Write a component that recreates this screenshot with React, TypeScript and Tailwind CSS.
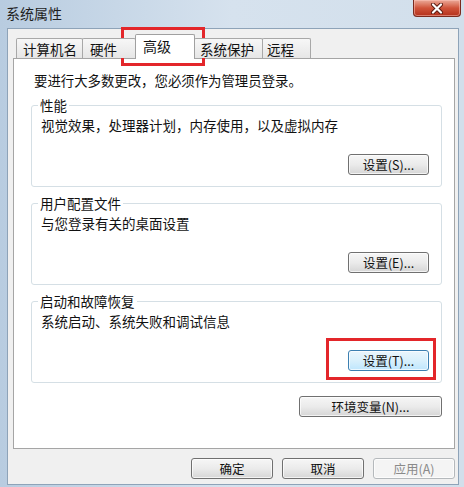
import React from "react";

function Btn({
  children,
  className = "",
  variant = "normal",
}: {
  children: React.ReactNode;
  className?: string;
  variant?: "normal" | "focus" | "disabled";
}) {
  const v =
    variant === "focus"
      ? "border-[#3c7fb1] bg-gradient-to-b from-[#eaf6fd] via-[#d9f0fc] to-[#bee6fd] text-[#111]"
      : variant === "disabled"
      ? "border-[#b5b9bc] bg-[#f4f4f4] text-[#8a8a8a]"
      : "border-[#707070] bg-gradient-to-b from-[#f6f6f6] via-[#ebebeb] to-[#d6d6d6] text-[#111]";
  return (
    <div
      className={`h-[21px] rounded-[3px] border flex items-center justify-center text-[12.5px] leading-[16px] shadow-[inset_0_0_0_1px_rgba(255,255,255,0.7)] ${v} ${className}`}
    >
      {children}
    </div>
  );
}

function Group({
  label,
  text,
  btn,
  focus,
}: {
  label: string;
  text: string;
  btn: string;
  focus?: boolean;
}) {
  return (
    <fieldset className="mt-[7px] border border-[#d5dfe5] rounded-[3px] p-0 min-w-0">
      <legend className="ml-[6px] px-[2px] text-[13.5px] leading-[18px] text-[#111]">
        {label}
      </legend>
      <div className="flex flex-col pt-[2px] pb-[11px] pl-[9px] pr-[12px]">
        <div className="text-[13.5px] leading-[18px] text-[#111]">{text}</div>
        <div className="mt-[20px] flex justify-end">
          <Btn className="w-[81px]" variant={focus ? "focus" : "normal"}>
            {btn}
          </Btn>
        </div>
      </div>
    </fieldset>
  );
}

export default function App() {
  const tabs = [
    { t: "计算机名", w: "w-[67px]", pl: "pl-[6px]", sel: false, first: true },
    { t: "硬件", w: "w-[54px]", pl: "pl-[7px]", sel: false, first: false },
    { t: "高级", w: "w-[60px]", pl: "pl-[7px]", sel: true, first: false },
    { t: "系统保护", w: "w-[69px]", pl: "pl-[5px]", sel: false, first: false },
    { t: "远程", w: "w-[49px]", pl: "pl-[4px]", sel: false, first: false },
  ];
  return (
    <div className="relative w-[464px] h-[487px] flex flex-col overflow-hidden bg-gradient-to-r from-[#b8cce0] via-[#d6e2ee] to-[#d2dfeb] font-['Noto_Sans_CJK_SC',sans-serif] text-[#111]">
      {/* title bar */}
      <div className="h-[28px] shrink-0 flex items-start">
        <div className="ml-[6px] mt-[4px] text-[14px] leading-[18px] text-[#1e1e1e]">
          系统属性
        </div>
        <div className="ml-auto mr-[3px] w-[48px] h-[17px] rounded-b-[4px] border border-t-0 border-[#7a2a1e] bg-gradient-to-b from-[#eaa999] via-[#d0533a] to-[#b3301b] flex items-center justify-center shadow-[inset_0_0_0_1px_rgba(255,200,190,0.5)]">
          <svg width="14" height="11" viewBox="0 0 14 11">
            <path d="M3 1.5 L11 9.5 M11 1.5 L3 9.5" stroke="#5a1a10" strokeWidth="4" strokeLinecap="round" />
            <path d="M3 1.5 L11 9.5 M11 1.5 L3 9.5" stroke="#ffffff" strokeWidth="2.2" strokeLinecap="round" />
          </svg>
        </div>
      </div>

      {/* client area */}
      <div className="flex-1 ml-[7px] mr-[5px] mb-[2px] border border-[#8ea3b8] bg-[#f0f0f0] flex flex-col">
        <div className="ml-[5px] mr-[3px] mt-[5px] flex flex-col">
          {/* tabs */}
          <div className="h-[24px] flex items-end pl-[3px] relative z-10">
            {tabs.map((tb, i) =>
              tb.sel ? (
                <div
                  key={i}
                  className={`${tb.w} -ml-[1px] h-[25px] -mb-[1px] relative z-10 bg-white border border-b-0 border-[#a0a0a0] rounded-t-[2px] flex items-center ${tb.pl} text-[14px] leading-[18px] pb-[2px]`}
                >
                  {tb.t}
                </div>
              ) : (
                <div
                  key={i}
                  className={`${tb.w} ${tb.first ? "" : "-ml-[1px]"} h-[20px] bg-gradient-to-b from-[#f7f7f7] to-[#e6e6e6] border border-b-0 border-[#a8a8a8] rounded-t-[2px] flex items-center ${tb.pl} text-[13.5px] leading-[18px]`}
                >
                  {tb.t}
                </div>
              )
            )}
          </div>

          {/* panel */}
          <div className="h-[391px] border border-[#a5a5a5] bg-white flex flex-col">
            <div className="mt-[12px] ml-[20px] text-[13.4px] leading-[18px]">
              要进行大多数更改，您必须作为管理员登录。
            </div>
            <div className="ml-[17px] mr-[12px] flex flex-col">
              <Group
                label="性能"
                text="视觉效果，处理器计划，内存使用，以及虚拟内存"
                btn="设置(S)..."
              />
              <Group label="用户配置文件" text="与您登录有关的桌面设置" btn="设置(E)..." />
              <Group
                label="启动和故障恢复"
                text="系统启动、系统失败和调试信息"
                btn="设置(T)..."
                focus
              />
              <div className="mt-[13px] flex justify-end">
                <Btn className="w-[143px]">环境变量(N)...</Btn>
              </div>
            </div>
          </div>

          {/* bottom buttons */}
          <div className="mt-[9px] flex justify-end gap-[9px]">
            <Btn className="w-[82px]">确定</Btn>
            <Btn className="w-[82px]">取消</Btn>
            <Btn className="w-[82px]" variant="disabled">
              应用(A)
            </Btn>
          </div>
        </div>
      </div>

      {/* red annotation boxes */}
      <div className="absolute left-[121px] top-[27px] w-[84px] h-[39px] border-[3px] border-[#e3262a] pointer-events-none" />
      <div className="absolute left-[326px] top-[338px] w-[110px] h-[42px] border-[3px] border-[#e3262a] pointer-events-none" />
    </div>
  );
}
